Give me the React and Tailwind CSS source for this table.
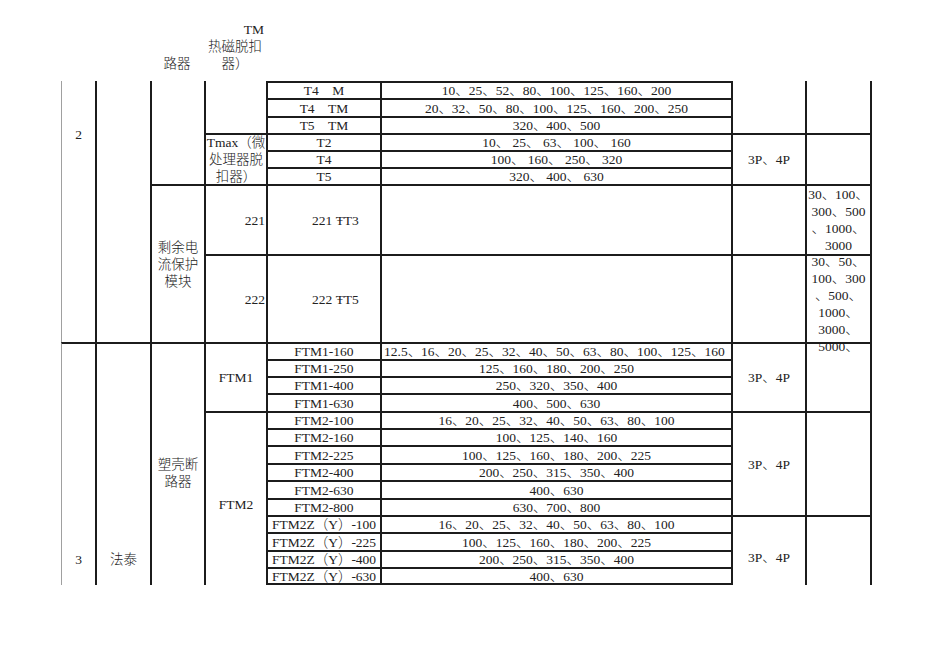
import React from "react";

const rows = [
  { rs: "row-start-1", m: "T4　M", v: "10、25、52、80、100、125、160、200" },
  { rs: "row-start-2", m: "T4　TM", v: "20、32、50、80、100、125、160、200、250" },
  { rs: "row-start-3", m: "T5　TM", v: "320、400、500" },
  { rs: "row-start-4", m: "T2", v: "10、 25、 63、 100、 160" },
  { rs: "row-start-5", m: "T4", v: "100、 160、 250、 320" },
  { rs: "row-start-6", m: "T5", v: "320、 400、 630" },
  { rs: "row-start-7", m: "221 ŦT3", v: "", ml: true },
  { rs: "row-start-8", m: "222 ŦT5", v: "", ml: true },
  { rs: "row-start-9", m: "FTM1-160", v: "12.5、16、20、25、32、40、50、63、80、100、125、160", vl: true },
  { rs: "row-start-10", m: "FTM1-250", v: "125、160、180、200、250" },
  { rs: "row-start-11", m: "FTM1-400", v: "250、320、350、400" },
  { rs: "row-start-12", m: "FTM1-630", v: "400、500、630" },
  { rs: "row-start-13", m: "FTM2-100", v: "16、20、25、32、40、50、63、80、100" },
  { rs: "row-start-14", m: "FTM2-160", v: "100、125、140、160" },
  { rs: "row-start-15", m: "FTM2-225", v: "100、125、160、180、200、225" },
  { rs: "row-start-16", m: "FTM2-400", v: "200、250、315、350、400" },
  { rs: "row-start-17", m: "FTM2-630", v: "400、630" },
  { rs: "row-start-18", m: "FTM2-800", v: "630、700、800" },
  { rs: "row-start-19", m: "FTM2Z（Y）-100", v: "16、20、25、32、40、50、63、80、100" },
  { rs: "row-start-20", m: "FTM2Z（Y）-225", v: "100、125、160、180、200、225" },
  { rs: "row-start-21", m: "FTM2Z（Y）-400", v: "200、250、315、350、400" },
  { rs: "row-start-22", m: "FTM2Z（Y）-630", v: "400、630", last: true },
];

const base = "flex whitespace-nowrap leading-[17px] border-[#1c1c1c]";

export default function App() {
  return (
    <div className="w-[950px] h-[672px] bg-white overflow-hidden text-[13.5px] font-light text-[#222] font-['Liberation_Serif','Noto_Sans_CJK_SC',serif]">
      {/* header overflow text */}
      <div className="ml-[61px] h-[81px] grid grid-cols-[34px_55px_54px_62px_114px_351px_74px_67px]">
        <div className="col-start-3 flex flex-col justify-end items-center pb-[9px] leading-[17px]">
          <div>路器</div>
        </div>
        <div className="col-start-4 flex flex-col justify-end pb-[9px] leading-[17px]">
          <div className="text-right pr-[2px]">TM</div>
          <div className="text-center">热磁脱扣</div>
          <div className="text-center">器）</div>
        </div>
      </div>

      <div className="ml-[61px] grid grid-cols-[34px_55px_54px_62px_114px_351px_74px_67px] grid-rows-[17px_18px_17px_17px_17px_17px_70px_88px_17px_17px_17px_18px_17px_17px_18px_17px_18px_17px_17px_18px_17px_18px]">
        {/* col 0 */}
        <div className={`${base} col-start-1 row-start-1 row-span-8 border-l border-l-[#a0a0a0] justify-center items-start pt-[45px]`}>2</div>
        <div className={`${base} col-start-1 row-start-9 row-span-14 border-l border-l-[#a0a0a0] border-t-2 border-t-[#1c1c1c] justify-center items-start pt-[207px]`}>3</div>

        {/* col 1 */}
        <div className={`${base} col-start-2 row-start-1 row-span-8 border-l-2`}></div>
        <div className={`${base} col-start-2 row-start-9 row-span-14 border-l-2 border-t-2 justify-center items-start pt-[207px]`}>法泰</div>

        {/* col 2 */}
        <div className={`${base} col-start-3 row-start-1 row-span-6 border-l-2`}></div>
        <div className={`${base} col-start-3 row-start-7 row-span-2 border-l-2 border-t-2 flex-col justify-center items-center leading-[16.5px]`}>
          <div>剩余电</div>
          <div>流保护</div>
          <div>模块</div>
        </div>
        <div className={`${base} col-start-3 row-start-9 row-span-14 border-l-2 border-t-2 flex-col items-center justify-start pt-[112px]`}>
          <div>塑壳断</div>
          <div>路器</div>
        </div>

        {/* col 3 */}
        <div className={`${base} col-start-4 row-start-1 row-span-3 border-l-2`}></div>
        <div className={`${base} col-start-4 row-start-4 row-span-3 border-l-2 border-t-2 flex-col justify-center items-center leading-[16px]`}>
          <div>Tmax（微</div>
          <div>处理器脱</div>
          <div>扣器）</div>
        </div>
        <div className={`${base} col-start-4 row-start-7 border-l-2 border-t-2 items-center justify-end pr-[1px]`}>221</div>
        <div className={`${base} col-start-4 row-start-8 border-l-2 border-t-2 items-center justify-end pr-[1px]`}>222</div>
        <div className={`${base} col-start-4 row-start-9 row-span-4 border-l-2 border-t-2 items-center justify-center`}>FTM1</div>
        <div className={`${base} col-start-4 row-start-13 row-span-10 border-l-2 border-t-2 items-start justify-center pt-[83px]`}>FTM2</div>

        {/* col 4 & 5 */}
        {rows.map((r) => (
          <React.Fragment key={r.rs}>
            <div
              className={`${base} col-start-5 ${r.rs} border-l-2 border-t-2 items-center ${
                r.ml ? "justify-start pl-[44px]" : "justify-center"
              } ${r.last ? "border-b-2" : ""}`}
            >
              {r.m}
            </div>
            <div
              className={`${base} col-start-6 ${r.rs} border-l-2 border-t-2 items-center ${
                r.vl ? "justify-start pl-[2px]" : "justify-center"
              } ${r.last ? "border-b-2" : ""}`}
            >
              {r.v}
            </div>
          </React.Fragment>
        ))}

        {/* col 6 */}
        <div className={`${base} col-start-7 row-start-1 row-span-3 border-l-2`}></div>
        <div className={`${base} col-start-7 row-start-4 row-span-3 border-l-2 border-t-2 items-center justify-center`}>3P、4P</div>
        <div className={`${base} col-start-7 row-start-7 border-l-2 border-t-2`}></div>
        <div className={`${base} col-start-7 row-start-8 border-l-2 border-t-2`}></div>
        <div className={`${base} col-start-7 row-start-9 row-span-4 border-l-2 border-t-2 items-center justify-center`}>3P、4P</div>
        <div className={`${base} col-start-7 row-start-13 row-span-6 border-l-2 border-t-2 items-center justify-center`}>3P、4P</div>
        <div className={`${base} col-start-7 row-start-19 row-span-4 border-l-2 border-t-2 items-start justify-center pt-[32px]`}>3P、4P</div>

        {/* col 7 */}
        <div className={`${base} col-start-8 row-start-1 row-span-3 border-l-2 border-r-2`}></div>
        <div className={`${base} col-start-8 row-start-4 row-span-3 border-l-2 border-r-2 border-t-2`}></div>
        <div className={`${base} col-start-8 row-start-7 border-l-2 border-r-2 border-t-2 flex-col items-center justify-start`}>
          <div>30、100、</div>
          <div>300、500</div>
          <div>、1000、</div>
          <div>3000</div>
        </div>
        <div className={`${base} col-start-8 row-start-8 border-l-2 border-r-2 border-t-2 flex-col items-center justify-start leading-[16.6px]`}>
          <div className="-mt-[3px] flex flex-col items-center">
            <div>30、50、</div>
            <div>100、300</div>
            <div>、500、</div>
            <div>1000、</div>
            <div>3000、</div>
            <div>5000、</div>
          </div>
        </div>
        <div className={`${base} col-start-8 row-start-9 row-span-4 border-l-2 border-r-2 border-t-2`}></div>
        <div className={`${base} col-start-8 row-start-13 row-span-6 border-l-2 border-r-2 border-t-2`}></div>
        <div className={`${base} col-start-8 row-start-19 row-span-4 border-l-2 border-r-2 border-t-2`}></div>
      </div>
    </div>
  );
}
